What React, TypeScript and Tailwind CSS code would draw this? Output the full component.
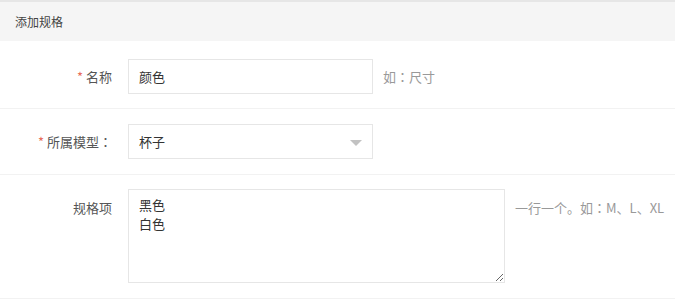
const font = { fontFamily: '"Noto Sans CJK SC", "Liberation Sans", sans-serif' };

// full-width colon drawn centred, as in the reference's font
const Colon = () => <span style={{ fontFamily: '"Noto Sans CJK JP", sans-serif' }}>：</span>;

const Label: React.FC<{ text: string; colon?: boolean; required?: boolean }> = ({ text, colon, required }) => {
  return (
    <div className="w-[114px] shrink-0 pr-[2px] text-right text-[13px] text-[#555]">
      {required && <span className="mr-[3px] text-[#e86c5a]">*</span>}
      {text}
      {colon && <Colon />}
    </div>
  );
};

export default function App() {
  return (
    <div className="h-[299px] w-[675px] overflow-hidden bg-white" style={font}>
      <div className="flex h-[41px] items-center border-t-2 border-[#e6e6e6] bg-[#f5f5f5] pl-[15px] text-[12px] text-[#444]">
        添加规格
      </div>

      <div className="flex items-center border-b border-[#f2f2f2] pb-[14px] pt-[18px]">
        <Label text="名称" required />
        <input
          className="ml-[14px] h-[35px] w-[245px] border border-[#e6e6e6] px-[10px] text-[13px] text-[#333] outline-none"
          defaultValue="颜色"
        />
        <span className="ml-[10px] text-[13px] text-[#999]">
          如<Colon />尺寸
        </span>
      </div>

      <div className="flex items-center border-b border-[#f2f2f2] py-[15px]">
        <Label text="所属模型" colon required />
        <div className="relative ml-[14px] flex h-[35px] w-[245px] items-center border border-[#e6e6e6] px-[10px] text-[13px] text-[#333]">
          杯子
          <span className="absolute right-[10px] top-[15px] h-0 w-0 border-x-[6px] border-t-[6px] border-x-transparent border-t-[#c2c2c2]" />
        </div>
      </div>

      <div className="flex items-start border-b border-[#f2f2f2] pb-[15px] pt-[14px]">
        <div className="pt-[9px]">
          <Label text="规格项" />
        </div>
        <textarea
          className="ml-[14px] h-[94px] w-[377px] border border-[#e6e6e6] px-[10px] py-[5px] text-[13px] leading-[19px] text-[#333] outline-none"
          defaultValue={"黑色\n白色"}
        />
        <span className="ml-[10px] pt-[9px] text-[13px] text-[#999]">
          一行一个。如<Colon />M、L、XL
        </span>
      </div>
    </div>
  );
}
